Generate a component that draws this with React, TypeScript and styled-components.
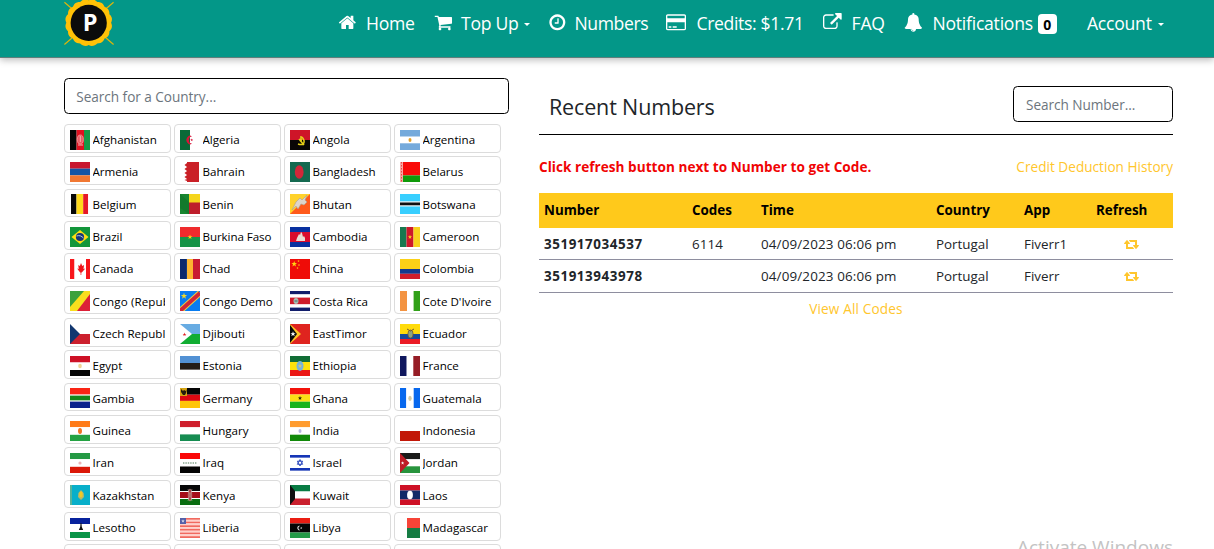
import React from "react";
import styled, { createGlobalStyle } from "styled-components";

const Global = createGlobalStyle`
  * { box-sizing: border-box; }
  html, body { margin: 0; padding: 0; height: 549px; overflow: hidden; background: #fff; }
  body { font-family: "Open Sans", "Noto Sans", sans-serif; color: #212529; }
`;

const Page = styled.div`
  position: relative;
  width: 1214px;
  height: 549px;
  overflow: hidden;
`;

const Header = styled.header`
  display: flex;
  height: 58px;
  padding-left: 64px;
  background: #039788;
  border-bottom: 1px solid #5f7f7c;
  box-shadow: 0 2px 7px rgba(0, 0, 0, 0.28);
`;

const LogoBox = styled.div`
  width: 50px;
  height: 46px;
  margin-right: 224px;
`;

const Nav = styled.nav`
  display: grid;
  grid-template-columns: 96px 114px 118px 157px 81px 183px 100px;
  height: 45px;
`;

const NavItem = styled.a`
  display: flex;
  align-items: center;
  color: #fff;
  font-size: 17.6px;
  white-space: nowrap;
`;

const NavIcon = styled.span<{ $w: number }>`
  display: flex;
  flex: none;
  width: ${(p) => p.$w}px;
`;

const Label = styled.span<{ $track: number }>`
  letter-spacing: ${(p) => p.$track}px;
`;

const Caret = styled.span`
  margin: 3px 0 0 6px;
  border-top: 3px solid #fff;
  border-left: 3px solid transparent;
  border-right: 3px solid transparent;
`;

const Badge = styled.span`
  display: flex;
  align-items: center;
  justify-content: center;
  width: 19px;
  height: 20px;
  margin: 3px 0 0 5px;
  border-radius: 4px;
  background: #fff;
  color: #000;
  font-size: 14px;
  font-weight: 700;
`;

const Main = styled.main`
  display: flex;
  align-items: flex-start;
  padding: 20px 0 0 64px;
`;

const Countries = styled.section`
  width: 445px;
  margin-right: 30px;
`;

const Search = styled.input<{ $w: number; $pad: number }>`
  display: block;
  width: ${(p) => p.$w}px;
  height: 36px;
  padding: 0 ${(p) => p.$pad}px;
  border: 1px solid #000;
  border-radius: 4.5px;
  outline: 0;
  background: #fff;
  font: 13.6px "Open Sans", sans-serif;
  letter-spacing: -0.04px;
  &::placeholder { color: #6c757d; opacity: 1; }
`;

const CountryGrid = styled.div`
  display: grid;
  grid-template-columns: repeat(4, 107px);
  grid-auto-rows: 28.6px;
  gap: 3.74px 3px;
  margin-top: 10.1px;
`;

const CountryCard = styled.div`
  display: flex;
  align-items: center;
  padding: 2.4px 5px 0;
  border: 1px solid #dcdcdc;
  border-radius: 4px;
`;

const CountryName = styled.span<{ $track: number }>`
  flex: 1;
  margin-left: 2.5px;
  overflow: hidden;
  color: #000;
  font-size: 11.6px;
  font-weight: 500;
  line-height: 17px;
  letter-spacing: ${(p) => p.$track}px;
  white-space: nowrap;
`;

const FlagSvg = styled.svg`
  display: block;
  flex: none;
  width: 20px;
  height: 20px;
`;

const Recent = styled.section`
  width: 634px;
  font-size: 13.6px;
`;

const RecentHead = styled.div`
  display: flex;
  align-items: flex-start;
  justify-content: space-between;
  height: 57px;
  padding: 8px 0 0 10px;
  border-bottom: 1px solid #000;
`;

const Title = styled.h4`
  margin: 6px 0 0;
  font-size: 21.5px;
  font-weight: 500;
  line-height: 30px;
  letter-spacing: -0.15px;
`;

const NoticeRow = styled.div`
  display: flex;
  align-items: center;
  justify-content: space-between;
  height: 58px;
  padding-top: 4px;
`;

const Notice = styled.strong`
  color: #f00404;
  font-size: 13.6px;
  font-weight: 700;
  letter-spacing: 0.02px;
`;

const Link = styled.a<{ $track?: number }>`
  color: #ffc62d;
  letter-spacing: ${(p) => p.$track ?? 0}px;
`;

const Table = styled.div`
  display: flex;
  flex-direction: column;
`;

const Row = styled.div<{ $head?: boolean; $h: number }>`
  display: grid;
  grid-template-columns: 148px 69px 175px 88px 72px 82px;
  align-items: center;
  height: ${(p) => p.$h}px;
  padding-bottom: ${(p) => (p.$head ? 2 : 0)}px;
  background: ${(p) => (p.$head ? "#ffc91b" : "transparent")};
  border-bottom: ${(p) => (p.$head ? "0" : "1px solid #8e8e9f")};
  color: ${(p) => (p.$head ? "#000" : "#212529")};
`;

const Cell = styled.span<{ $bold?: boolean; $track?: number }>`
  padding-left: 5px;
  font-size: 13.4px;
  font-weight: ${(p) => (p.$bold ? 700 : 400)};
  letter-spacing: ${(p) => p.$track ?? 0}px;
  white-space: nowrap;
`;

const RefreshCell = styled.span`
  display: flex;
  justify-content: center;
  padding-right: 1px;
  color: #ffc62d;
`;

const ViewAll = styled.div`
  height: 32px;
  line-height: 32px;
  text-align: center;
`;

const Watermark = styled.div`
  position: absolute;
  left: 1017px;
  top: 533px;
  color: #c3c3c3;
  font-size: 19px;
  line-height: 28px;
  white-space: nowrap;
`;

const ICONS: Record<string, [number, string]> = {
  home: [1792, "M1472 992v480q0 26-19 45t-45 19h-384v-384h-256v384h-384q-26 0-45-19t-19-45v-480q0-1 .5-3t.5-3l575-474 575 474q1 2 1 6zm223-69l-62 74q-8 9-21 11h-3q-13 0-21-7l-692-577-692 577q-12 8-24 7-13-2-21-11l-62-74q-8-10-7-23.5t11-21.5l719-599q32-26 76-26t76 26l244 204v-195q0-14 9-23t23-9h192q14 0 23 9t9 23v408l219 182q10 8 11 21.5t-7 23.5z"],
  cart: [1792, "M704 1536q0 52-38 90t-90 38-90-38-38-90 38-90 90-38 90 38 38 90zm896 0q0 52-38 90t-90 38-90-38-38-90 38-90 90-38 90 38 38 90zm128-1088v512q0 24-16.5 42.5t-40.5 21.5l-1044 122q13 60 13 70 0 16-24 64h920q26 0 45 19t19 45-19 45-45 19h-1024q-26 0-45-19t-19-45q0-11 8-31.5t16-36 21.5-40 15.5-29.5l-177-823h-204q-26 0-45-19t-19-45 19-45 45-19h256q16 0 28.5 6.5t19.5 15.5 13 24.5 8 26 5.5 29.5 4.5 26h1201q26 0 45 19t19 45z"],
  clock: [1792, "M1024 544v448q0 14-9 23t-23 9h-320q-14 0-23-9t-9-23v-64q0-14 9-23t23-9h224v-352q0-14 9-23t23-9h64q14 0 23 9t9 23zm416 352q0-148-73-273t-198-198-273-73-273 73-198 198-73 273 73 273 198 198 273 73 273-73 198-198 73-273zm224 0q0 209-103 385.5t-279.5 279.5-385.5 103-385.5-103-279.5-279.5-103-385.5 103-385.5 279.5-279.5 385.5-103 385.5 103 279.5 279.5 103 385.5z"],
  card: [1920, "M1760 128q66 0 113 47t47 113v1216q0 66-47 113t-113 47h-1600q-66 0-113-47t-47-113v-1216q0-66 47-113t113-47h1600zm-1600 128q-13 0-22.5 9.5t-9.5 22.5v224h1664v-224q0-13-9.5-22.5t-22.5-9.5h-1600zm1600 1280q13 0 22.5-9.5t9.5-22.5v-608h-1664v608q0 13 9.5 22.5t22.5 9.5h1600zm-1504-128v-128h256v128h-256zm384 0v-128h384v128h-384z"],
  external: [1792, "M1408 928v320q0 119-84.5 203.5t-203.5 84.5h-832q-119 0-203.5-84.5t-84.5-203.5v-832q0-119 84.5-203.5t203.5-84.5h704q14 0 23 9t9 23v64q0 14-9 23t-23 9h-704q-66 0-113 47t-47 113v832q0 66 47 113t113 47h832q66 0 113-47t47-113v-320q0-14 9-23t23-9h64q14 0 23 9t9 23zm384-864v512q0 26-19 45t-45 19-45-19l-176-176-652 652q-10 10-23 10t-23-10l-114-114q-10-10-10-23t10-23l652-652-176-176q-19-19-19-45t19-45 45-19h512q26 0 45 19t19 45z"],
  bell: [1792, "M912 1696q0-16-16-16-59 0-101.5-42.5t-42.5-101.5q0-16-16-16t-16 16q0 73 51.5 124.5t124.5 51.5q16 0 16-16zm816-288q0 52-38 90t-90 38h-448q0 106-75 181t-181 75-181-75-75-181h-448q-52 0-90-38t-38-90q50-42 91-88t85-119.5 74.5-158.5 50-206 19.5-260q0-152 117-282.5t307-158.5q-8-19-8-39 0-40 28-68t68-28 68 28 28 68q0 20-8 39 190 28 307 158.5t117 282.5q0 139 19.5 260t50 206 74.5 158.5 85 119.5 91 88z"],
  retweet: [1920, "M1280 1504q0 13-9.5 22.5t-22.5 9.5h-960q-8 0-13.5-2t-9-7-5.5-8-3-11.5-1-11.5v-600h-192q-26 0-45-19t-19-45q0-24 15-41l320-384q19-22 49-22t49 22l320 384q15 17 15 41 0 26-19 45t-45 19h-192v384h576q16 0 25 11l160 192q7 10 7 21zm640-416q0 24-15 41l-320 384q-20 23-49 23t-49-23l-320-384q-15-17-15-41 0-26 19-45t45-19h192v-384h-576q-16 0-25-12l-160-192q-7-9-7-20 0-13 9.5-22.5t22.5-9.5h960q8 0 13.5 2t9 7 5.5 8 3 11.5 1 11.5v600h192q26 0 45 19t19 45z"],
};

function Icon({ name, size }: { name: string; size: number }) {
  const [w, d] = ICONS[name];
  return (
    <svg width={(size * w) / 1792} height={size} viewBox={`0 0 ${w} 1792`} fill="currentColor">
      <path d={d} />
    </svg>
  );
}

function Logo() {
  const points = Array.from({ length: 96 }, (_, i) => {
    const a = (i / 96) * Math.PI * 2;
    const r = 22.4 + Math.abs(Math.sin(a * 8)) * 1.2;
    return `${(24.7 + r * Math.cos(a)).toFixed(2)},${(22.7 + r * Math.sin(a)).toFixed(2)}`;
  }).join(" ");
  return (
    <svg width="50" height="46" viewBox="0 0 50 46">
      <path d="M0.4 2.2L49.6 44.4M49.6 2.2L0.4 44.4" stroke="#d9b50c" strokeWidth="1.3" />
      <polygon points={points} fill="#ffc107" />
      <circle cx="24.7" cy="22.9" r="18.1" fill="#0b0b0b" />
      <text x="26.2" y="31.4" textAnchor="middle" fontFamily="Open Sans" fontWeight="700" fontSize="23.5" fill="#fff">P</text>
    </svg>
  );
}

/* Stripe helpers: each entry is [colour, share of the 20px flag]. */
type Stripe = [string, number];
function stripes(list: Stripe[], vertical: boolean) {
  const total = list.reduce((s, [, n]) => s + n, 0);
  let at = 0;
  return list.map(([c, n], i) => {
    const pos = at;
    const len = (n / total) * 20;
    at += len;
    return vertical ? (
      <rect key={i} x={pos} y={0} width={len} height={20} fill={c} />
    ) : (
      <rect key={i} x={0} y={pos} width={20} height={len} fill={c} />
    );
  });
}
const h = (...l: Stripe[]) => stripes(l, false);
const v = (...l: Stripe[]) => stripes(l, true);
const STAR = "M0-1L.25-.3H.95L.38.12.6.8 0 .4-.6.8-.38.12-.95-.3H-.25Z";
const star = (x: number, y: number, r: number, c: string) => (
  <path d={STAR} transform={`translate(${x} ${y}) scale(${r})`} fill={c} />
);

const FLAGS: Record<string, React.ReactNode> = {
  Afghanistan: <>{v(["#050505", 6.6], ["#e01020", 7.4], ["#159a48", 6])}<ellipse cx="10.3" cy="9.5" rx="3" ry="4.5" fill="#ec5963" stroke="#f2a1a0" strokeWidth=".8" /><path d="M8 15h5M10.3 6v6" stroke="#f5b3af" /></>,
  Algeria: <>{v(["#0b6a38", 1], ["#fff", 1])}<path d="M12 6.5A3.5 4.3 0 1 0 12 13.5A3 3.4 0 1 1 12 6.5Z" fill="#d81338" />{star(11.7, 10, 1.5, "#d81338")}</>,
  Angola: <>{h(["#ce1528", 1], ["#090606", 1])}<path d="M8 14c6 2 8-2 4-7M9 9l5 6M11 6v6" fill="none" stroke="#e6cf18" strokeWidth="1.5" />{star(11, 10, 2, "#e6cf18")}</>,
  Argentina: <>{h(["#75aadb", 6.7], ["#fff", 6.6], ["#75aadb", 6.7])}<ellipse cx="10" cy="10" rx="1.5" ry="2" fill="#e3a12b" /></>,
  Armenia: h(["#c8172f", 1], ["#1355a6", 1], ["#f17833", 1]),
  Bahrain: <>{v(["#fff", 7], ["#ca2027", 12], ["#fff", 1])}<path d="M7 1L4.5 3 7 5 4.5 7 7 9 4.5 11 7 13 4.5 15 7 17 4.5 18 7 19Z" fill="#ca2027" /></>,
  Bangladesh: <><rect width="20" height="20" fill="#14694f" /><ellipse cx="9.2" cy="10" rx="4.4" ry="6.7" fill="#d22739" /></>,
  Belarus: <>{h(["#f90b08", 13.4], ["#109a0a", 6.6])}<rect width="3" height="20" fill="#f8a8a4" /><path d="M1.5 0v20" stroke="#e84743" strokeDasharray="1.5 1.5" /></>,
  Belgium: <>{v(["#fff", 1], ["#080808", 5.5], ["#ffd91c", 6.7], ["#e61927", 5], ["#fff", 1.8])}</>,
  Benin: <>{v(["#188530", 9], ["#f5d51c", 11])}<rect x="9" y="8.5" width="11" height="11.5" fill="#be1e2b" /><path d="M0 0L9 8V20L0 14Z" fill="#096624" opacity=".35" /></>,
  Bhutan: <><rect width="20" height="20" fill="#ff5a1b" /><path d="M0 0H20L0 20Z" fill="#ffd22b" /><path d="M2 16l4-8 4-4 2 2 5-5-2 5 2 2-3 3-3-1-3 5-2-3Z" fill="#ddd4ca" stroke="#aaa091" strokeWidth=".6" /></>,
  Botswana: h(["#38cfff", 7.5], ["#ddebed", 1], ["#111", 3], ["#ddebed", 1], ["#38cfff", 7.5]),
  Brazil: <><rect width="20" height="20" fill="#12963b" /><path d="M1.5 10L10 3l8.5 7-8.5 7Z" fill="#fedf12" /><circle cx="10" cy="10" r="4.1" fill="#183679" /><path d="M6.5 9c3-1 5 0 7 2" fill="none" stroke="#b7cdd1" /></>,
  "Burkina Faso": <>{h(["#ef2b2d", 1], ["#169447", 1])}{star(10, 10, 2.6, "#fbcf19")}</>,
  Cambodia: <>{h(["#0931a0", 5], ["#d90b2c", 10], ["#0931a0", 5])}<path d="M6 14h9v-3l-1-2-1 1-1-4-1-1-1 3-1-1-1 2-1 2Z" fill="#e8dcd4" /></>,
  Cameroon: <>{v(["#18784f", 6.5], ["#ce182a", 7], ["#f8d21d", 6.5])}{star(10, 10, 2.2, "#f8d21d")}</>,
  Canada: <>{v(["#f8161b", 4.5], ["#fff", 11.5], ["#f8161b", 4])}<path d="M11 4l1.3 3 1.7-1-.5 4 1.8-.5-3.5 4h-.5V16h-.7v-2.5h-.5l-3-4 1.6.5-.4-4 1.6 1Z" fill="#ee151b" /></>,
  Chad: v(["#0b286c", 6], ["#173979", 1], ["#fdb531", 6], ["#c81c32", 7]),
  China: <><rect width="20" height="20" fill="#ef0c08" />{star(4.2, 5, 3, "#fed411")}{star(8.5, 2, 1.2, "#fed411")}{star(9, 6, 1.2, "#fed411")}{star(7.5, 9, 1.2, "#fed411")}</>,
  Colombia: h(["#fbd117", 10], ["#12398e", 4.8], ["#ce1d2c", 5.2]),
  "Congo (Republic)": <><rect width="20" height="20" fill="#3ba13c" /><path d="M20 0V20H0Z" fill="#dc2038" /><path d="M0 20V16L14 0h6v3L7 20Z" fill="#f9df1d" /></>,
  "Congo Demo": <><rect width="20" height="20" fill="#087cf0" /><path d="M0 20L20 2" stroke="#f1d43e" strokeWidth="6" /><path d="M0 20L20 2" stroke="#cf2639" strokeWidth="4" />{star(4, 5, 3.3, "#f5d927")}</>,
  "Costa Rica": <>{h(["#111d6b", 3.4], ["#fff", 3.2], ["#cf1b2b", 6.8], ["#fff", 3.2], ["#111d6b", 3.4])}<ellipse cx="6" cy="10" rx="2.5" ry="2.9" fill="#a8bcb2" /><path d="M4.5 10h3" stroke="#426c6a" /></>,
  "Cote D'Ivoire": v(["#f39342", 7], ["#fff", 6.6], ["#31a018", 6.4]),
  "Czech Republic": <>{h(["#fff", 1], ["#cc202e", 1])}<path d="M0 0L10 10 0 20Z" fill="#12376f" /></>,
  Djibouti: <>{h(["#68ace3", 1], ["#11ad32", 1])}<path d="M0 0L12 10 0 20Z" fill="#fff" />{star(4.5, 10.5, 2, "#df2021")}</>,
  EastTimor: <><rect width="20" height="20" fill="#df241f" /><path d="M0 0L11 10 0 20Z" fill="#ffc526" /><path d="M0 1L7 10 0 19Z" fill="#080808" />{star(3, 10, 2.8, "#fff")}</>,
  Ecuador: <>{h(["#ffdb0b", 10], ["#184b9b", 5], ["#eb1b25", 5])}<ellipse cx="10.5" cy="10" rx="2.6" ry="4" fill="#8fa47f" stroke="#755934" strokeWidth=".8" /><path d="M7 5l3.5 2L14 5" fill="none" stroke="#755934" /></>,
  Egypt: <>{h(["#ce1126", 6.5], ["#fff", 7.5], ["#050505", 6])}<ellipse cx="10" cy="10" rx="1.8" ry="2.2" fill="#f1d596" /></>,
  Estonia: h(["#5291d4", 7], ["#231d19", 6.8], ["#fff", 6.2]),
  Ethiopia: <>{h(["#116d35", 6], ["#fce30b", 8], ["#eb1715", 6])}<ellipse cx="10" cy="10" rx="3.5" ry="5" fill="#74b4dd" />{star(10, 10, 2.5, "#cec67a")}</>,
  France: v(["#10185e", 6.7], ["#fff", 6.6], ["#961d26", 6.7]),
  Gambia: h(["#fa2515", 6.6], ["#fff", 1], ["#15861a", 5], ["#fff", 1], ["#0a218c", 6.4]),
  Germany: <>{h(["#050505", 6.7], ["#dd0811", 6.2], ["#ffc509", 7.1])}<rect width="7" height="8" fill="#d5a414" /><path d="M1 1l2 2 1-1 2 1 1-2-1 4-1 2H3L1 4Z" fill="#241b0c" /></>,
  Ghana: <>{h(["#f3130b", 6.5], ["#fce016", 7.2], ["#18b31b", 6.3])}{star(10, 10.2, 2.2, "#292208")}</>,
  Guatemala: <>{v(["#0868ee", 6.3], ["#fff", 7.4], ["#0868ee", 6.3])}<ellipse cx="10" cy="10.3" rx="1.7" ry="2.6" fill="#cfc9a8" /></>,
  Guinea: <>{h(["#ff7b18", 6.2], ["#fff", 7.6], ["#24a243", 6.2])}<ellipse cx="10" cy="10" rx="2" ry="3" fill="#ef7424" /></>,
  Hungary: h(["#cf1f2d", 6.3], ["#fff", 7.1], ["#168c51", 6.6]),
  India: <>{h(["#ff9b2f", 6.3], ["#fff", 7.4], ["#118909", 6.3])}<ellipse cx="10" cy="10" rx="1.5" ry="2" fill="#b7b6df" /></>,
  Indonesia: h(["#fff", 1], ["#c21808", 1]),
  Iran: <>{h(["#249944", 6.2], ["#fff", 7.6], ["#db1808", 6.2])}<circle cx="10" cy="10" r="1.6" fill="#ebb4b7" /></>,
  Iraq: <>{h(["#fa0808", 6], ["#fff", 7.5], ["#050505", 6.5])}<path d="M3 10h14" stroke="#a5bbaa" strokeWidth="2" strokeDasharray="1.4 1" /></>,
  Israel: <>{h(["#fff", 2], ["#1535b6", 2.8], ["#fff", 10.2], ["#1535b6", 2.8], ["#fff", 2.2])}<path d="M10 6.5l2.7 4.8H7.3ZM10 13l-2.7-4.8h5.4Z" fill="none" stroke="#1535b6" strokeWidth=".8" /></>,
  Jordan: <>{h(["#1b1b19", 6.3], ["#fff", 7], ["#28943d", 6.7])}<path d="M0 0L9.5 10 0 20Z" fill="#bf1c26" />{star(2.6, 10, 1.8, "#fff")}</>,
  Kazakhstan: <><rect width="20" height="20" fill="#08afca" /><path d="M1 0v20" stroke="#a4b86d" /><path d="M11 5l2.6 3 .4 4-3 3-3-3 .4-4Z" fill="#b9b968" /><ellipse cx="11" cy="9.5" rx="1.6" ry="3" fill="#f1c924" /></>,
  Kenya: <>{h(["#080808", 6], ["#fff", 1], ["#a60c18", 6], ["#fff", 1], ["#096c10", 6])}<ellipse cx="10" cy="10" rx="1.7" ry="6" fill="#9e2a2c" stroke="#ddc6c3" strokeWidth=".5" /><path d="M8 4l4 12M12 4L8 16" stroke="#d9b8b5" strokeWidth=".5" /></>,
  Kuwait: <>{h(["#087b43", 6.5], ["#fff", 7], ["#ca202e", 6.5])}<path d="M0 0L5 6V14L0 20Z" fill="#101010" /></>,
  Laos: <>{h(["#ce1126", 5.5], ["#112967", 9], ["#ce1126", 5.5])}<ellipse cx="10" cy="10" rx="2.9" ry="4.3" fill="#fff" /></>,
  Lesotho: <>{h(["#07229d", 6], ["#fff", 8], ["#099447", 6])}<path d="M10.6 5h.8l.4 4 1.4 3H8.8l1.4-3Z" fill="#111" /></>,
  Liberia: <>{h(...Array.from({ length: 11 }, (_, i): Stripe => [i % 2 ? "#ffd0ca" : "#f1695f", 1]))}<rect width="6" height="6" fill="#5560a8" />{star(3, 3, 1.8, "#e0e0f0")}</>,
  Libya: <>{h(["#ea1d13", 5.5], ["#050505", 9], ["#239a48", 5.5])}<path d="M10.2 7.9A2 2.3 0 1 0 10.2 12.1A1.6 1.8 0 1 1 10.2 7.9Z" fill="#fff" />{star(11.2, 10, 1.2, "#fff")}</>,
  Madagascar: <>{h(["#f64337", 1], ["#147b42", 1])}<rect width="7" height="20" fill="#fdfdfd" /></>,
  Malawi: h(["#111", 1], ["#ce1126", 1], ["#168c51", 1]),
  Malaysia: h(["#cc0001", 1], ["#fff", 1], ["#cc0001", 1]),
  Mali: v(["#14b53a", 1], ["#fcd116", 1], ["#ce1126", 1]),
  Mauritania: h(["#0b6a38", 1], ["#0b6a38", 1]),
};

const TRACK: Record<string, number> = {
  Bangladesh: 0.02,
  "Burkina Faso": -0.08,
  "Congo Demo": 0,
  "Congo (Republic)": 0.12,
  "Czech Republic": 0,
};

const HEADERS = ["Number", "Codes", "Time", "Country", "App", "Refresh"];
const NUMBERS = [
  { number: "351917034537", code: "6114", time: "04/09/2023 06:06 pm", country: "Portugal", app: "Fiverr1", h: 32 },
  { number: "351913943978", code: "", time: "04/09/2023 06:06 pm", country: "Portugal", app: "Fiverr", h: 33 },
];

const NAV = [
  { icon: "home", w: 28, text: "Home", track: -0.3 },
  { icon: "cart", w: 27, text: "Top Up", track: -0.3, caret: true },
  { icon: "clock", w: 26.5, text: "Numbers", track: -0.4 },
  { icon: "card", w: 30.5, text: "Credits: $1.71", track: -0.35 },
  { icon: "external", w: 28.5, text: "FAQ", track: -0.2 },
  { icon: "bell", w: 28.5, text: "Notifications", track: -0.25, badge: "0" },
  { icon: "", w: 0, text: "Account", track: -0.25, caret: true },
];

export default function App() {
  return (
    <Page>
      <Global />
      <Header>
        <LogoBox><Logo /></LogoBox>
        <Nav>
          {NAV.map((n) => (
            <NavItem key={n.text}>
              {n.icon && <NavIcon $w={n.w}><Icon name={n.icon} size={18.7} /></NavIcon>}
              <Label $track={n.track}>{n.text}</Label>
              {n.badge && <Badge>{n.badge}</Badge>}
              {n.caret && <Caret />}
            </NavItem>
          ))}
        </Nav>
      </Header>
      <Main>
        <Countries>
          <Search $w={445} $pad={11.3} placeholder="Search for a Country..." />
          <CountryGrid>
            {Object.keys(FLAGS).map((name) => (
              <CountryCard key={name}>
                <FlagSvg viewBox="0 0 20 20">{FLAGS[name]}</FlagSvg>
                <CountryName $track={TRACK[name] ?? 0}>{name}</CountryName>
              </CountryCard>
            ))}
          </CountryGrid>
        </Countries>
        <Recent>
          <RecentHead>
            <Title>Recent Numbers</Title>
            <Search $w={160} $pad={12} placeholder="Search Number..." />
          </RecentHead>
          <NoticeRow>
            <Notice>Click refresh button next to Number to get Code.</Notice>
            <Link $track={0.02}>Credit Deduction History</Link>
          </NoticeRow>
          <Table>
            <Row $head $h={35}>
              {HEADERS.map((t) => <Cell key={t} $bold>{t}</Cell>)}
            </Row>
            {NUMBERS.map((r) => (
              <Row key={r.number} $h={r.h}>
                <Cell $bold $track={0.56}>{r.number}</Cell>
                <Cell $track={0.1}>{r.code}</Cell>
                <Cell $track={0.15}>{r.time}</Cell>
                <Cell>{r.country}</Cell>
                <Cell>{r.app}</Cell>
                <RefreshCell><Icon name="retweet" size={14} /></RefreshCell>
              </Row>
            ))}
          </Table>
          <ViewAll><Link $track={0.15}>View All Codes</Link></ViewAll>
        </Recent>
      </Main>
      <Watermark>Activate Windows</Watermark>
    </Page>
  );
}
